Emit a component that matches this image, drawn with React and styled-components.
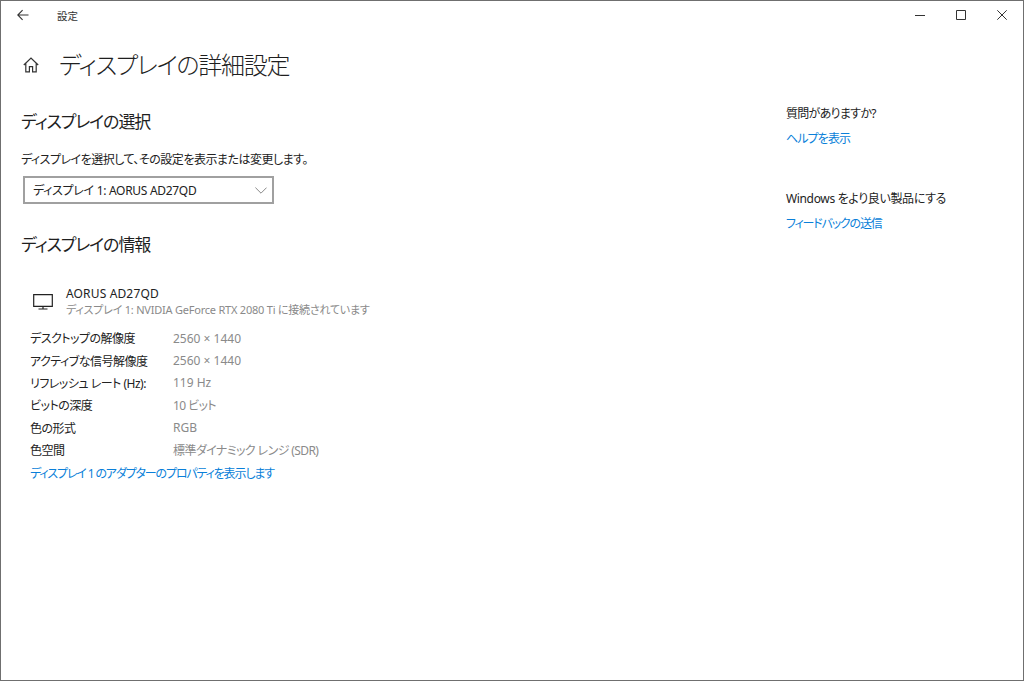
import React from "react";
import styled, { createGlobalStyle } from "styled-components";

const GlobalStyle = createGlobalStyle`
  html, body {
    margin: 0;
    padding: 0;
    background: #ffffff;
  }
  body {
    font-family: "Noto Sans", "Noto Sans CJK JP", sans-serif;
    font-feature-settings: "palt";
    color: #1f1f1f;
  }
`;

const displayRows = [
  { label: "デスクトップの解像度", value: "2560 × 1440" },
  { label: "アクティブな信号解像度", value: "2560 × 1440" },
  { label: "リフレッシュ レート (Hz):", value: "119 Hz" },
  { label: "ビットの深度", value: "10 ビット", tight: true },
  { label: "色の形式", value: "RGB" },
  { label: "色空間", value: "標準ダイナミック レンジ (SDR)", tight: true },
];

const App = () => {
  return (
    <>
      <GlobalStyle />
      <Frame>
        <TitleBar>
          <BackIcon viewBox="0 0 12 12">
            <path d="M11.5 6H.8M5.6 1.2 .8 6l4.8 4.8" />
          </BackIcon>
          <AppName>設定</AppName>
          <WindowButtons>
            <WindowButton>
              <svg width="10" height="10" viewBox="0 0 10 10">
                <path d="M0 5.5h10" />
              </svg>
            </WindowButton>
            <WindowButton>
              <svg width="10" height="10" viewBox="0 0 10 10">
                <path d="M.5.5h9v9h-9z" />
              </svg>
            </WindowButton>
            <WindowButton>
              <svg width="10" height="10" viewBox="0 0 10 10">
                <path d="M.3.3l9.4 9.4M9.7.3.3 9.7" />
              </svg>
            </WindowButton>
          </WindowButtons>
        </TitleBar>

        <Body>
          <Main>
            <PageHeader>
              <HomeIcon viewBox="0 0 16 16">
                <path d="M.8 8 8 1l7.2 7M2.8 6.2v8.6h3.6V9.6h3.2v5.2h3.6V6.2" />
              </HomeIcon>
              <PageTitle>ディスプレイの詳細設定</PageTitle>
            </PageHeader>

            <SectionTitle>ディスプレイの選択</SectionTitle>
            <Description>ディスプレイを選択して、その設定を表示または変更します。</Description>
            <SelectBox>
              <span>ディスプレイ 1: AORUS AD27QD</span>
              <svg width="12" height="7" viewBox="0 0 12 7">
                <path d="M.4.6 6 6.2 11.6.6" />
              </svg>
            </SelectBox>

            <InfoTitle>ディスプレイの情報</InfoTitle>
            <MonitorRow>
              <MonitorIcon viewBox="0 0 20 16">
                <path d="M.7.7h18.6v11.6H.7zM10 12.3v2.4M5.5 15h9" />
              </MonitorIcon>
              <MonitorText>
                <MonitorName>AORUS AD27QD</MonitorName>
                <MonitorSub>ディスプレイ 1: NVIDIA GeForce RTX 2080 Ti に接続されています</MonitorSub>
              </MonitorText>
            </MonitorRow>

            <InfoList>
              {displayRows.map((row) => (
                <InfoRow key={row.label}>
                  <InfoLabel>{row.label}</InfoLabel>
                  <InfoValue $tight={row.tight}>{row.value}</InfoValue>
                </InfoRow>
              ))}
            </InfoList>
            <AdapterLink>ディスプレイ 1 のアダプターのプロパティを表示します</AdapterLink>
          </Main>

          <Aside>
            <AsideBlock>
              <AsideText $spacing="-0.7px">質問がありますか?</AsideText>
              <AsideLink $spacing="-0.9px">ヘルプを表示</AsideLink>
            </AsideBlock>
            <AsideBlock>
              <AsideText $spacing="-0.35px">Windows をより良い製品にする</AsideText>
              <AsideLink $spacing="-1.2px">フィードバックの送信</AsideLink>
            </AsideBlock>
          </Aside>
        </Body>
      </Frame>
    </>
  );
};

const Frame = styled.div`
  box-sizing: border-box;
  width: 1024px;
  height: 681px;
  border: 1px solid #6f6f6f;
  background: #ffffff;
  overflow: hidden;
`;

const TitleBar = styled.div`
  display: flex;
  align-items: center;
  height: 28px;
  padding-left: 16px;
`;

const BackIcon = styled.svg`
  width: 12px;
  height: 12px;
  fill: none;
  stroke: #333333;
  stroke-width: 1.1;
`;

const AppName = styled.div`
  margin-left: 28px;
  font-size: 10.5px;
  color: #333333;
`;

const WindowButtons = styled.div`
  display: flex;
  margin-left: auto;
  padding-right: 1px;
`;

const WindowButton = styled.div`
  display: flex;
  align-items: center;
  justify-content: center;
  width: 41px;
  height: 28px;
  svg {
    fill: none;
    stroke: #333333;
    stroke-width: 1;
  }
`;

const Body = styled.div`
  display: flex;
`;

const Main = styled.div`
  width: 785px;
  padding-left: 20px;
  box-sizing: border-box;
`;

const PageHeader = styled.div`
  display: flex;
  align-items: center;
  height: 40px;
  margin-top: 16px;
`;

const HomeIcon = styled.svg`
  width: 16px;
  height: 16px;
  margin-left: 2px;
  fill: none;
  stroke: #333333;
  stroke-width: 1.2;
`;

const PageTitle = styled.h1`
  margin: 0 0 0 20px;
  font-size: 24px;
  font-weight: 300;
  letter-spacing: -1.3px;
  line-height: 40px;
  color: #1f1f1f;
`;

const SectionTitle = styled.h2`
  margin: 24px 0 0;
  font-size: 17px;
  font-weight: 400;
  letter-spacing: -1.1px;
  line-height: 26px;
  color: #1f1f1f;
`;

const Description = styled.div`
  margin-top: 15px;
  font-size: 12px;
  letter-spacing: -0.5px;
  line-height: 20px;
  color: #222222;
`;

const SelectBox = styled.div`
  box-sizing: border-box;
  display: flex;
  align-items: center;
  justify-content: space-between;
  width: 251px;
  height: 28px;
  margin: 6px 0 0 2px;
  padding: 0 5px 0 8px;
  border: 2px solid #a0a0a0;
  font-size: 12px;
  letter-spacing: -0.3px;
  color: #222222;
  svg {
    fill: none;
    stroke: #888888;
    stroke-width: 1;
  }
`;

const InfoTitle = styled(SectionTitle)`
  margin-top: 28px;
`;

const MonitorRow = styled.div`
  display: flex;
  align-items: center;
  margin-top: 27px;
`;

const MonitorIcon = styled.svg`
  width: 20px;
  height: 16px;
  margin-left: 12px;
  fill: none;
  stroke: #222222;
  stroke-width: 1.2;
`;

const MonitorText = styled.div`
  margin-left: 13px;
`;

const MonitorName = styled.div`
  font-size: 12px;
  letter-spacing: 0.15px;
  line-height: 17px;
  color: #222222;
`;

const MonitorSub = styled.div`
  font-size: 11px;
  letter-spacing: -0.22px;
  line-height: 16px;
  color: #8a8a8a;
`;

const InfoList = styled.div`
  margin-top: 9px;
`;

const InfoRow = styled.div`
  display: grid;
  grid-template-columns: 143px 1fr;
  height: 22.4px;
  padding-left: 9px;
  align-items: center;
  font-size: 12px;
`;

const InfoLabel = styled.div`
  letter-spacing: -0.5px;
  color: #222222;
`;

const InfoValue = styled.div`
  letter-spacing: ${(props) => (props.$tight ? "-0.6px" : "0")};
  color: #8a8a8a;
`;

const AdapterLink = styled.div`
  margin-top: 2px;
  padding-left: 9px;
  font-size: 12px;
  letter-spacing: -1.15px;
  line-height: 22px;
  color: #0a7fd9;
`;

const Aside = styled.div`
  padding-top: 74px;
`;

const AsideBlock = styled.div`
  height: 85px;
`;

const AsideText = styled.div`
  font-size: 12px;
  letter-spacing: ${(props) => props.$spacing};
  line-height: 22px;
  color: #222222;
`;

const AsideLink = styled.div`
  margin-top: 3px;
  font-size: 12px;
  letter-spacing: ${(props) => props.$spacing};
  line-height: 22px;
  color: #0a7fd9;
`;

export default App;
